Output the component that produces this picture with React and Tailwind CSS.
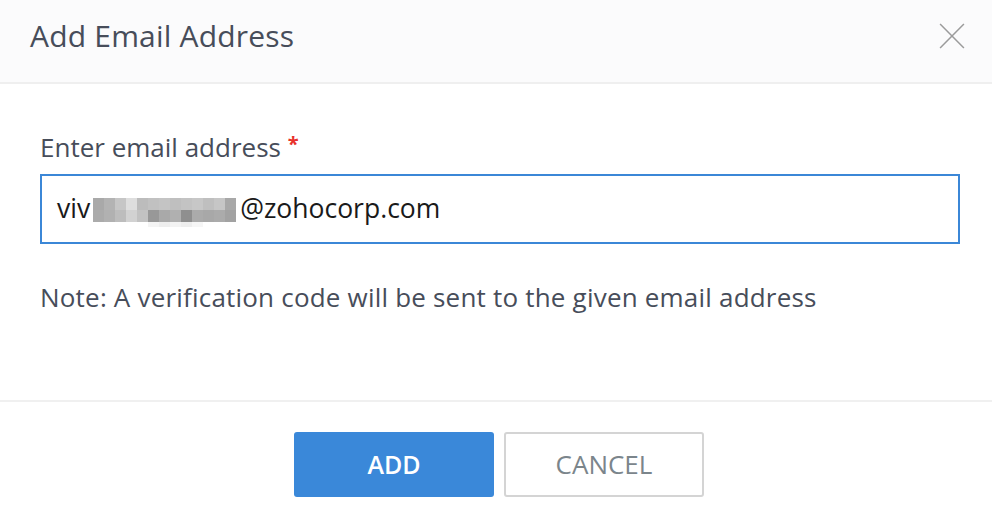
import React from 'react';

const blurRows = [
  ['#a9a9a9', '#b3b3b3', '#c6c6c6', '#dedede', '#bcbcbc', '#c1c1c1', '#c4c4c4', '#bfbfbf', '#c3c3c3', '#c7c7c7', '#bfbfbf', '#c6c6c6', '#a8a8a8'],
  ['#ababab', '#b1b1b1', '#bdbdbd', '#d2d2d2', '#c2c2c2', '#989898', '#a9a9a9', '#b0b0b0', '#8f8f8f', '#ababab', '#a8a8a8', '#ababab', '#a2a2a2'],
  ['#ffffff', '#ffffff', '#ffffff', '#ffffff', '#ffffff', '#f4f4f4', '#eeeeee', '#f3f3f3', '#eeeeee', '#f6f6f6', '#ffffff', '#ffffff', '#ffffff'],
];

function Redacted() {
  return (
    <span className="inline-flex flex-col ml-[3px] mr-[4px] translate-y-[3px]">
      {blurRows.map((row, r) => (
        <span key={r} className={`flex ${r === 2 ? 'h-[5px]' : 'h-[12px]'}`}>
          {row.map((c, i) => (
            <span key={i} className="w-[11px] h-full" style={{ background: c }} />
          ))}
        </span>
      ))}
    </span>
  );
}

export default function App() {
  return (
    <div className="w-[992px] h-[520px] bg-white flex flex-col font-['Open_Sans','Liberation_Sans',sans-serif] text-[#474d5a]">
      <div className="h-[84px] shrink-0 bg-[#fbfbfc] border-b-2 border-[#efefef] flex items-center justify-between pl-[30px] pr-[27px] pb-[10px]">
        <h1 className="text-[30px] leading-none tracking-[0.2px]">Add Email Address</h1>
        <button className="w-[26px] h-[26px] text-[#9b9b9b]">
          <svg viewBox="0 0 24 24" className="w-full h-full" fill="none" stroke="currentColor" strokeWidth="1.4">
            <path d="M1 1L23 23M23 1L1 23" />
          </svg>
        </button>
      </div>

      <div className="h-[318px] shrink-0 pl-[40px] pr-[32px] pt-[50px] border-b-2 border-[#f0f0f0]">
        <label className="block text-[26px] leading-none mb-[14px]">
          Enter email address <span className="text-[#e8322b] font-bold align-top text-[20px]">*</span>
        </label>
        <div className="h-[70px] border-2 border-[#3b87d7] flex items-center px-[15px] text-[26.5px] text-[#1a1a1a]">
          <span>viv</span>
          <Redacted />
          <span>@zohocorp.com</span>
        </div>
        <p className="mt-[40px] text-[26px] leading-none tracking-[0.2px]">
          Note: A verification code will be sent to the given email address
        </p>
      </div>

      <div className="flex-1 flex justify-center items-start pt-[30px] pl-[6px] gap-[10px]">
        <button className="w-[200px] h-[65px] rounded-[3px] bg-[#3a88d9] text-white text-[25px] font-semibold">
          ADD
        </button>
        <button className="w-[200px] h-[65px] rounded-[3px] border-2 border-[#d4d4d4] bg-white text-[#7b858b] text-[26px]">
          CANCEL
        </button>
      </div>
    </div>
  );
}
